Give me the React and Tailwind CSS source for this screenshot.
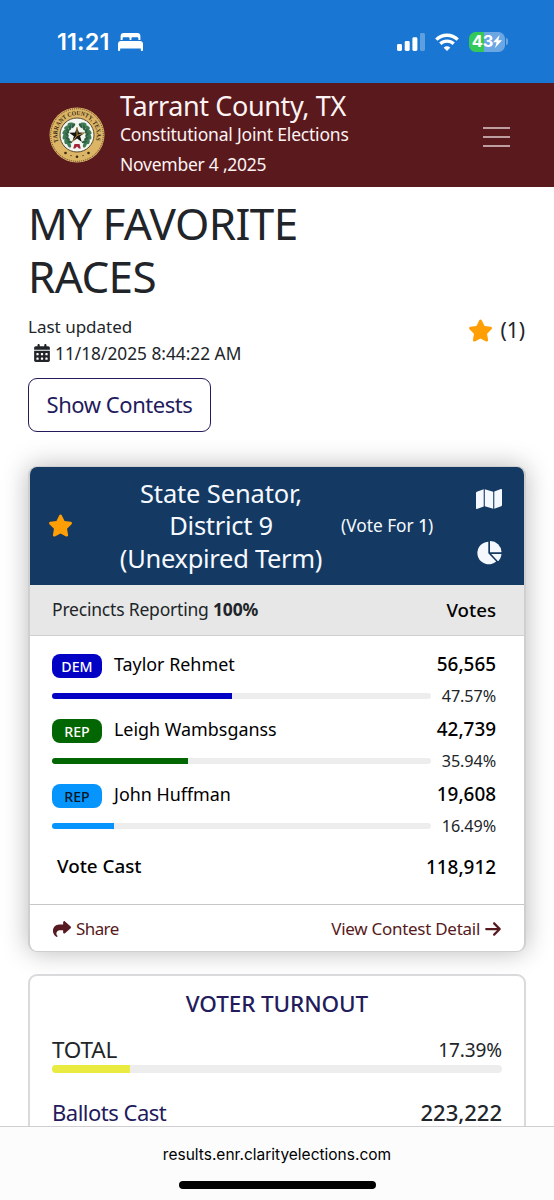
import { FaStar, FaCalendarDays, FaShare, FaArrowRight } from 'react-icons/fa6';

const candidates = [
  { party: 'DEM', name: 'Taylor Rehmet', votes: '56,565', pct: 47.57, badge: 'bg-[#0202c4] text-white', bar: 'bg-[#0202c4]' },
  { party: 'REP', name: 'Leigh Wambsganss', votes: '42,739', pct: 35.94, badge: 'bg-[#026602] text-white', bar: 'bg-[#026602]' },
  { party: 'REP', name: 'John Huffman', votes: '19,608', pct: 16.49, badge: 'bg-[#0595fd] text-[#0a1526]', bar: 'bg-[#0595fd]' },
];

function StatusBar() {
  return (
    <div className="h-[83px] shrink-0 bg-[#1976d2] flex items-center justify-between pl-[57px] pr-[46px] text-white font-['Inter',sans-serif]">
      <div className="flex items-center gap-[7px]">
        <span className="w-[54px] whitespace-nowrap text-[23.500px] leading-none font-semibold tracking-[0.100px]">11:21</span>
        <svg width="25" height="18" viewBox="0 0 25 18" fill="currentColor">
          <path d="M2.6 7V3.2C2.6 1.2 3.700 0 5.700 0h13.600c2 0 3.100 1.200 3.100 3.200V7h-2V5.600c0-.9-.5-1.400-1.400-1.400h-4.200c-.9 0-1.400.5-1.400 1.400V7h-1.800V5.600c0-.9-.5-1.400-1.400-1.400H6c-.9 0-1.400.5-1.400 1.400V7z" />
          <path d="M3 8h19c1.800 0 3 1.200 3 3v6c0 .6-.3.900-.9.900h-.4c-.6 0-.9-.3-.9-.9v-1.500H2.200V17c0 .6-.3.900-.9.900H.9c-.6 0-.9-.3-.9-.9v-6c0-1.800 1.200-3 3-3z" />
        </svg>
      </div>
      <div className="flex items-center">
        <svg width="28" height="18" viewBox="0 0 28 18" fill="currentColor">
          <rect x="0" y="11" width="5" height="7" rx="1.400" />
          <rect x="7.700" y="8" width="5" height="10" rx="1.400" />
          <rect x="15.400" y="4.300" width="5" height="13.700" rx="1.400" />
          <rect x="23" y="0" width="5" height="18" rx="1.400" opacity=".3" />
        </svg>
        <svg className="ml-[10px]" width="24" height="18" viewBox="0 0 24 18" fill="none" stroke="currentColor" strokeWidth="3.300">
          <path d="M1.300 6.600a15.300 15.300 0 0 1 21.400 0" />
          <path d="M5.300 10.800a9.600 9.600 0 0 1 13.400 0" />
          <path d="M12 18l-3.300-3.300a4.700 4.700 0 0 1 6.600 0z" fill="currentColor" stroke="none" />
        </svg>
        <div className="ml-[10px] flex h-[20px] w-[36px] items-center justify-center rounded-[6.5px] bg-[linear-gradient(90deg,#34c759_43%,#6ba7e3_43%)]">
          <span className="text-[16.500px] leading-none font-bold tracking-[-0.2px]">43</span>
          <svg width="9" height="13" viewBox="0 0 9 13" fill="currentColor">
            <path d="M6.700 0L0 7.300h3.600L2 13l7-7.700H5.300z" />
          </svg>
        </div>
        <div className="ml-px h-[7px] w-[2px] rounded-r-full bg-[#6ba7e3]" />
      </div>
    </div>
  );
}

function Seal() {
  const leaves = [-60, -38, -16, 6, 28, 50];
  return (
    <svg width="56" height="56" viewBox="0 0 56 56">
      <defs>
        <path id="seal-arc" d="M10.800 37.500A19.700 19.700 0 1 1 45.200 37.500" />
      </defs>
      <circle cx="28" cy="28" r="27.500" fill="#dcb566" />
      <circle cx="28" cy="28" r="26.300" fill="none" stroke="#5b3f1c" strokeWidth="1" strokeDasharray="1 1" />
      <circle cx="28" cy="28" r="17" fill="#f4f6f2" stroke="#5a4a2a" strokeWidth="1" />
      <text fontSize="6.300" fontWeight="700" fill="#3a2a12" fontFamily="Liberation Serif, serif">
        <textPath href="#seal-arc" startOffset="3" textLength="74" lengthAdjust="spacingAndGlyphs">TARRANT COUNTY, TEXAS</textPath>
      </text>
      {leaves.map((a) => (
        <g key={a} fill="#3f7a55">
          <ellipse cx="15.500" cy="28" rx="1.700" ry="3.300" transform={`rotate(${-a} 28 28) rotate(25 15.500 28)`} />
          <ellipse cx="18" cy="28" rx="1.300" ry="2.800" fill="#2b5f41" transform={`rotate(${-a + 8} 28 28) rotate(-30 18 28)`} />
          <ellipse cx="40.500" cy="28" rx="1.700" ry="3.300" transform={`rotate(${a} 28 28) rotate(-25 40.500 28)`} />
          <ellipse cx="38" cy="28" rx="1.300" ry="2.800" fill="#2b5f41" transform={`rotate(${a - 8} 28 28) rotate(30 38 28)`} />
        </g>
      ))}
      <path d="M28 20l1.900 5.600 5.900.1-4.700 3.500 1.700 5.700-4.800-3.400-4.800 3.400 1.700-5.700-4.700-3.500 5.900-.1z" fill="#17150f" />
      <path d="M28 20v8.500l-4.800 6.400M28 28.500l7.800-2.800" stroke="#b9913f" strokeWidth="1" fill="none" />
      <path d="M25.500 37h5l1.300 4.500h-2L28 39.500l-1.800 2h-2z" fill="#a3263a" />
      <g fill="#3a2a12">
        <circle cx="16.500" cy="46" r="1.300" />
        <circle cx="22" cy="48.600" r=".7" />
        <circle cx="28" cy="49.800" r="1.300" />
        <circle cx="34" cy="48.600" r=".7" />
        <circle cx="39.500" cy="46" r="1.300" />
      </g>
    </svg>
  );
}

function MapIcon() {
  return (
    <svg width="26" height="20" viewBox="0 0 26 20" fill="currentColor">
      <path d="M7.700.2v17.200L1 19.900c-.6.2-1-.1-1-.7V4c0-.6.3-1 .8-1.200z" />
      <path d="M8.800.2l8.400 2.500v17.100l-8.400-2.500z" />
      <path d="M18.300 2.600L25 .1c.6-.2 1 .1 1 .7V16c0 .6-.3 1-.8 1.200l-6.900 2.600z" />
    </svg>
  );
}

function PieIcon() {
  return (
    <svg width="25" height="24" viewBox="0 0 25 24" fill="currentColor">
      <path d="M11.300.7v11.600l7.900 8.100A11.300 11.300 0 1 1 11.300.7z" />
      <path d="M13 .3c0-.2.200-.3.400-.3A11.200 11.200 0 0 1 24.500 10.700c0 .3-.2.500-.5.500H13z" />
      <path d="M14.200 13h9.900c.3 0 .5.2.4.500a11.300 11.300 0 0 1-3 6.400c-.2.2-.5.2-.7 0z" />
    </svg>
  );
}

function SiteHeader() {
  return (
    <header className="h-[104px] shrink-0 bg-[#59191d] flex items-center justify-between pl-[49px] pr-[44px] text-[#fdf3f3]">
      <div className="flex items-center gap-[15px]">
        <Seal />
        <div className="whitespace-nowrap pt-px">
          <div className="text-[27px] leading-[30px] tracking-[-0.380px]">Tarrant County, TX</div>
          <div className="text-[17.500px] leading-[26px] tracking-[-0.200px]">Constitutional Joint Elections</div>
          <div className="text-[17.500px] leading-[34px] tracking-[-0.250px]">November 4 ,2025</div>
        </div>
      </div>
      <div className="mt-[3px] flex w-[27px] flex-col gap-[7px]">
        <div className="h-[2px] bg-[#bd9fa1]" />
        <div className="h-[2px] bg-[#bd9fa1]" />
        <div className="h-[2px] bg-[#bd9fa1]" />
      </div>
    </header>
  );
}

function Candidate({ c }) {
  return (
    <div className="h-[65px]">
      <div className="flex h-[31px] items-center">
        <span className={`mt-[3px] flex h-[24px] w-[50px] items-center justify-center rounded-[8px] pt-[2px] text-[14.200px] font-medium ${c.badge}`}>{c.party}</span>
        <span className="ml-[12px] text-[17.900px] text-black">{c.name}</span>
        <span className="ml-auto text-[18.900px] font-medium text-black">{c.votes}</span>
      </div>
      <div className="flex h-[32px] items-center justify-between">
        <div className="h-[6px] w-[379px] overflow-hidden rounded-full bg-[#ededed]">
          <div className={`h-full ${c.bar}`} style={{ width: `${c.pct}%` }} />
        </div>
        <span className="pt-[2px] text-[16.200px] tracking-[-0.100px] text-[#212529]">{c.pct}%</span>
      </div>
    </div>
  );
}

function ContestCard() {
  return (
    <section className="mt-[34px] h-[486px] shrink-0 overflow-hidden rounded-[9px] border-x-2 border-y border-[#cfcfd0] bg-white shadow-[0_0_26px_rgba(0,0,0,0.28)]">
      <div className="flex h-[118px] items-center bg-[#143962] text-[#f5f9ff]">
        <FaStar className="ml-[18px] size-[25px] text-[#ff9f05]" />
        <h2 className="ml-[38px] w-[220px] text-center text-[25.500px] leading-[32.500px] tracking-[-0.300px]">
          <span className="tracking-[-0.150px]">State Senator,</span><br />District 9<br />(Unexpired Term)
        </h2>
        <span className="ml-[10px] whitespace-nowrap text-[17.300px]">(Vote For <span className="font-medium">1</span>)</span>
        <div className="ml-auto mr-[22px] mt-[2px] flex flex-col items-center gap-[32px]">
          <MapIcon />
          <PieIcon />
        </div>
      </div>
      <div className="flex h-[51px] items-center justify-between border-b border-[#d0d0d0] bg-[#e7e7e7] pl-[22px] pr-[28px]">
        <span className="text-[17.500px] tracking-[-0.200px] text-[#212529]">Precincts Reporting <b>100%</b></span>
        <span className="pt-px text-[18.700px] font-medium text-black">Votes</span>
      </div>
      <div className="h-[268px] pl-[22px] pr-[28px] pt-[13px]">
        {candidates.map((c) => (
          <Candidate key={c.name} c={c} />
        ))}
        <div className="flex items-center justify-between pl-[5px] pt-[8px] font-medium text-black">
          <span className="text-[18.800px]">Vote Cast</span>
          <span className="pt-px text-[18.900px]">118,912</span>
        </div>
      </div>
      <div className="flex h-[47px] items-center justify-between border-t border-[#c6c6c8] pl-[23px] pr-[23px] pt-[2px] text-[17px] text-[#571a20]">
        <span className="flex items-center gap-[5px] tracking-[-0.600px]"><FaShare className="size-[18px]" />Share</span>
        <span className="flex items-center gap-[5px] tracking-[-0.280px]">View Contest Detail<FaArrowRight className="h-[18px] w-[16px]" /></span>
      </div>
    </section>
  );
}

function TurnoutCard() {
  return (
    <section className="mt-[22px] h-[300px] shrink-0 rounded-[9px] border-2 border-[#dadadc] bg-white px-[22px] pt-[12px]">
      <h2 className="text-center text-[22.500px] leading-[32px] font-medium tracking-[-0.100px] text-[#231b5c]">VOTER TURNOUT</h2>
      <div className="mt-[10px] flex h-[38px] items-center justify-between text-[#212529]">
        <span className="pt-[2px] text-[22.500px] tracking-[-0.200px]">TOTAL</span>
        <span className="pt-[3px] text-[19px] tracking-[-0.100px]">17.39%</span>
      </div>
      <div className="-mt-[3px] h-[8px] overflow-hidden rounded-full bg-[#ededed]">
        <div className="h-full bg-[#e9eb41]" style={{ width: '17.39%' }} />
      </div>
      <div className="mt-[23px] flex h-[34px] items-center justify-between text-[22px]">
        <span className="tracking-[-0.500px] text-[#231b5c]">Ballots Cast</span>
        <span className="font-medium text-[#212529]">223,222</span>
      </div>
    </section>
  );
}

export default function App() {
  return (
    <div className="flex h-[1200px] w-[554px] flex-col overflow-hidden bg-white font-['Noto_Sans',sans-serif]">
      <StatusBar />
      <SiteHeader />
      <main className="flex min-h-0 flex-1 flex-col overflow-hidden px-[28px] pt-[10px] text-[#212529]">
        <h1 className="w-[300px] text-[44px] leading-[53.300px] tracking-[-0.600px]">MY FAVORITE RACES</h1>
        <div className="mt-[9px] flex justify-between text-[17px] leading-[27px]">
          <div>
            <div>Last updated</div>
            <div className="flex items-center gap-[4px] pl-[5px]">
              <FaCalendarDays className="size-[18px]" />
              <span className="text-[17.300px]">11/18/2025 8:44:22 AM</span>
            </div>
          </div>
          <div className="flex h-[36px] items-center gap-[7px] pr-px text-[21px]">
            <FaStar className="size-[25px] text-[#ff9f05]" />
            <span>(1)</span>
          </div>
        </div>
        <button className="mt-[11px] h-[54px] w-[183px] shrink-0 rounded-[9px] border border-[#231b5c] text-[22px] tracking-[-0.460px] text-[#231b5c]">
          Show Contests
        </button>
        <ContestCard />
        <TurnoutCard />
      </main>
      <footer className="flex h-[74px] shrink-0 flex-col items-center border-t border-[#cfcfd1] bg-[#fcfcfd] font-['Inter',sans-serif]">
        <div className="mt-[18px] text-[15.500px] leading-[20px] text-black">results.enr.clarityelections.com</div>
        <div className="mt-[16px] h-[8px] w-[197px] rounded-full bg-black" />
      </footer>
    </div>
  );
}
